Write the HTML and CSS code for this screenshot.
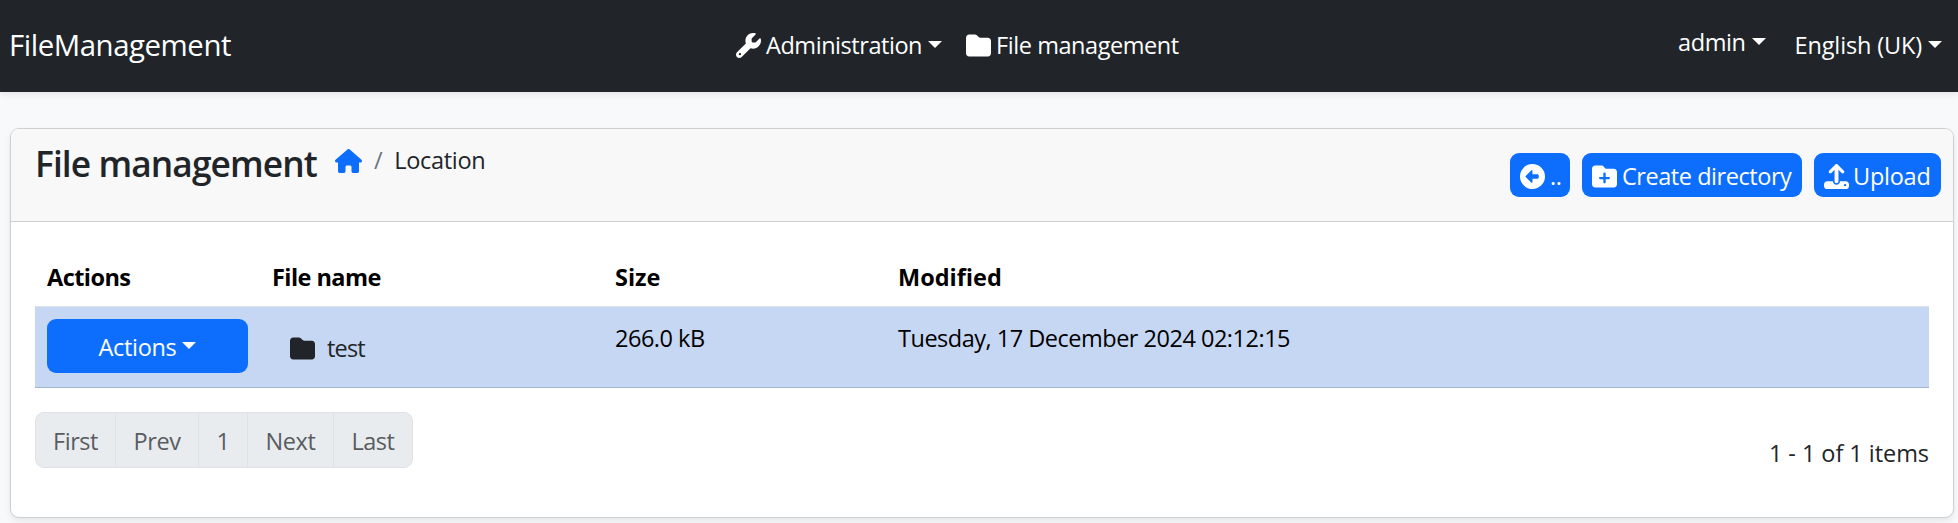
FILE: index.html
```html
<!DOCTYPE html>
<html lang="en">
<head>
<meta charset="utf-8">
<title>File management</title>
<link rel="stylesheet" href="styles.css">
</head>
<body>
<svg class="symbols" aria-hidden="true">
  <symbol id="folder" viewBox="0 0 512 512"><path d="M64 480H448c35.3 0 64-28.7 64-64V160c0-35.3-28.7-64-64-64H298.500c-17 0-33.300-6.700-45.300-18.700L226.700 50.700c-12-12-28.300-18.700-45.300-18.700H64C28.700 32 0 60.700 0 96V416c0 35.300 28.700 64 64 64z"/></symbol>
  <symbol id="folder-plus" viewBox="0 0 512 512"><path d="M512 416c0 35.300-28.700 64-64 64H64c-35.300 0-64-28.700-64-64V96C0 60.700 28.700 32 64 32H192c20.100 0 39.100 9.500 51.200 25.600l19.200 25.600c6 8.100 15.500 12.800 25.600 12.800H448c35.300 0 64 28.700 64 64V416zM232 376c0 13.300 10.700 24 24 24s24-10.700 24-24V312h64c13.300 0 24-10.700 24-24s-10.700-24-24-24H280V200c0-13.300-10.700-24-24-24s-24 10.700-24 24v64H168c-13.300 0-24 10.700-24 24s10.700 24 24 24h64v64z"/></symbol>
  <symbol id="wrench" viewBox="0 0 512 512"><path d="M352 320c88.400 0 160-71.600 160-160c0-15.300-2.200-30.100-6.200-44.200c-3.100-10.800-16.400-13.200-24.300-5.300l-76.800 76.800c-3 3-7.100 4.700-11.300 4.700H336c-8.800 0-16-7.200-16-16V118.600c0-4.200 1.700-8.300 4.700-11.300l76.800-76.800c7.900-7.900 5.400-21.200-5.300-24.300C382.100 2.200 367.300 0 352 0C263.600 0 192 71.600 192 160c0 19.100 3.400 37.500 9.500 54.500L19.900 396.100C7.200 408.800 0 426.100 0 444.100C0 481.600 30.400 512 67.900 512c18 0 35.300-7.200 48-19.900L297.500 310.500c17 6.200 35.400 9.500 54.500 9.500zM80 408a24 24 0 1 1 0 48 24 24 0 1 1 0-48z"/></symbol>
  <symbol id="back" viewBox="0 0 512 512"><path d="M512 256A256 256 0 1 0 0 256a256 256 0 1 0 512 0zM116.700 244.700l112-112c4.600-4.600 11.500-5.900 17.400-3.500s9.900 8.300 9.900 14.800v64h96c17.700 0 32 14.300 32 32v32c0 17.700-14.300 32-32 32h-96v64c0 6.500-3.900 12.300-9.900 14.800s-12.900 1.100-17.400-3.500l-112-112c-6.200-6.200-6.200-16.400 0-22.600z"/></symbol>
  <symbol id="upload" viewBox="0 0 512 512"><path fill-rule="evenodd" d="M233.400 9.400c12.500-12.500 32.800-12.500 45.300 0l128 128c12.500 12.500 12.500 32.800 0 45.300s-32.800 12.500-45.300 0L296 117.300V352c0 22-18 40-40 40s-40-18-40-40V117.300L150.600 182.600c-12.500 12.500-32.800 12.500-45.300 0s-12.500-32.800 0-45.300zM64 352H184c0 40 32 72 72 72s72-32 72-72H448c35.300 0 64 28.700 64 64v32c0 35.300-28.700 64-64 64H64c-35.300 0-64-28.700-64-64v-32c0-35.300 28.700-64 64-64zM432 408a24 24 0 1 0 0 48a24 24 0 1 0 0-48z"/></symbol>
  <symbol id="house" viewBox="0 0 576 512"><path d="M575.800 255.500c0 18-15 32.100-32 32.100h-32l.7 160.200V472c0 22.100-17.900 40-40 40H392c-22.100 0-40-17.900-40-40V384c0-17.700-14.300-32-32-32H256c-17.700 0-32 14.300-32 32v88c0 22.100-17.900 40-40 40H104c-22.100 0-40-17.900-40-40V287.600H32c-18 0-32-14-32-32.100c0-9 3-17 10-24L266.400 8c7-7 15-8 22-8s15 2 21 7L564.800 231.500c8 7 12 15 11 24z"/></symbol>
</svg>

<header class="navbar">
  <a class="brand">FileManagement</a>
  <nav class="menu">
    <a class="menu-item"><svg class="icon"><use href="#wrench"/></svg><span class="t-administration">Administration</span><i class="caret"></i></a>
    <a class="menu-item"><svg class="icon"><use href="#folder"/></svg><span class="t-files">File management</span></a>
  </nav>
  <div class="account">
    <a class="user"><span>admin</span><i class="caret"></i></a>
    <a class="language"><span>English (UK)</span><i class="caret"></i></a>
  </div>
</header>

<main class="card">
  <div class="card-header">
    <h1 class="title">File management</h1>
    <nav class="breadcrumb"><svg class="home"><use href="#house"/></svg><span class="slash">/</span><span class="location">Location</span></nav>
    <div class="toolbar">
      <button class="btn btn-back"><svg class="icon"><use href="#back"/></svg><span>..</span></button>
      <button class="btn btn-create"><svg class="icon"><use href="#folder-plus"/></svg><span>Create directory</span></button>
      <button class="btn btn-upload"><svg class="icon"><use href="#upload"/></svg><span>Upload</span></button>
    </div>
  </div>
  <div class="card-body">
    <table class="files">
      <colgroup><col class="col-actions"><col class="col-name"><col class="col-size"><col></colgroup>
      <thead>
        <tr><th>Actions</th><th>File name</th><th class="wide">Size</th><th class="wide">Modified</th></tr>
      </thead>
      <tbody>
        <tr>
          <td><button class="btn btn-actions"><span>Actions</span><i class="caret"></i></button></td>
          <td><a class="file"><svg class="icon"><use href="#folder"/></svg><span>test</span></a></td>
          <td>266.0 kB</td>
          <td>Tuesday, 17 December 2024 02:12:15</td>
        </tr>
      </tbody>
    </table>
    <div class="footer">
      <ul class="pagination"><li class="p-first">First</li><li class="p-prev">Prev</li><li class="p-num">1</li><li class="p-next">Next</li><li class="p-last">Last</li></ul>
      <span class="summary">1 - 1 of 1 items</span>
    </div>
  </div>
</main>
</body>
</html>
```
FILE: styles.css
```css
* { box-sizing: border-box; }

body {
  margin: 0;
  height: 523px;
  overflow: hidden;
  background: #f8f9fb;
  color: #212529;
  font: 400 23.5px/36px "Open Sans", sans-serif;
  letter-spacing: -0.45px;
  white-space: nowrap;
}

.symbols { position: absolute; width: 0; height: 0; }
.icon { display: block; flex: none; width: 25px; height: 25px; fill: currentColor; }

.caret {
  flex: none;
  width: 0;
  height: 0;
  margin: -2px 0 0 6px;
  border: 7px solid transparent;
  border-top-color: currentColor;
  border-bottom: 0;
}

.navbar {
  display: grid;
  grid-template-columns: 736px 1fr auto;
  height: 92px;
  padding-top: 27px;
  background: #212529;
  color: #fff;
  box-shadow: 0 3px 6px rgba(0, 0, 0, .075);
}
.brand { padding-left: 9px; font-size: 29.4px; }
.menu { display: flex; gap: 24px; }
.menu-item { display: flex; align-items: center; gap: 5px; height: 36px; }
.menu-item .caret { margin-left: 1px; }
.t-files { letter-spacing: -0.44px; }
.account { display: flex; gap: 29px; padding-right: 16px; }
.user, .language { display: flex; align-items: center; height: 36px; }
.user { margin-top: -3px; letter-spacing: -0.4px; }
.language { letter-spacing: -0.15px; }

.card {
  height: 390px;
  margin: 36px 4px 0 10px;
  border: 1px solid #cdcfd1;
  border-radius: 9px;
  background: #fff;
  box-shadow: 0 3px 6px rgba(0, 0, 0, .075);
}
.card-header {
  display: flex;
  align-items: flex-start;
  height: 93px;
  padding: 12px 12px 0 24px;
  border-bottom: 1px solid #cdcfd1;
  border-radius: 8px 8px 0 0;
  background: #f8f8f8;
}
.title { margin: 1px 0 0; width: 300px; font: 550 35.3px/43px "Open Sans", sans-serif; letter-spacing: -0.9px; }
.breadcrumb { display: flex; align-items: center; margin: 1px 0 0; letter-spacing: -0.32px; }
.home { width: 27px; height: 24px; margin-top: 1px; fill: #0d6efd; }
.slash { margin: 0 12px 0 12px; color: #6c757d; }
.toolbar { display: flex; gap: 12px; margin: 12px 0 0 auto; }

.btn {
  display: flex;
  align-items: center;
  height: 44px;
  padding: 0 10px;
  border: 0;
  border-radius: 9px;
  background: #0d6efd;
  color: #fff;
  font: inherit;
  letter-spacing: inherit;
}
.toolbar .btn { gap: 5px; }
.toolbar .icon { margin-top: 2px; }
.btn span { padding-top: 1px; }
.btn-back { width: 60px; }
.btn-create { width: 220px; }
.toolbar .btn-upload { width: 127px; gap: 4px; letter-spacing: -0.25px; }

.card-body { padding: 24px; }
.files { width: 100%; table-layout: fixed; border-collapse: separate; border-spacing: 0; color: #000; }
.col-actions { width: 225px; }
.col-name { width: 343px; }
.col-size { width: 283px; }
.files th { padding: 13px 12px 11px; border-bottom: 1px solid #dee2e6; text-align: left; font-weight: 700; letter-spacing: -0.55px; }
.files .wide { letter-spacing: 0; }
.files td { height: 81px; padding: 13px 12px 12px; border-bottom: 1px solid #a6b5cc; background: #c6d7f3; vertical-align: top; letter-spacing: -0.49px; }
.files td:first-child { padding-top: 12px; }
.btn-actions { justify-content: center; width: 201px; height: 54px; letter-spacing: -0.34px; }
.file { display: flex; align-items: center; gap: 12px; height: 36px; margin: 10px 0 0 18px; color: #212529; letter-spacing: -0.8px; }

.footer { display: flex; justify-content: space-between; margin-top: 24px; }
.pagination {
  display: flex;
  margin: 0;
  padding: 0;
  overflow: hidden;
  width: 378px;
  height: 56px;
  border: 1px solid #dee2e6;
  border-radius: 9px;
  background: #e9ecef;
  color: #595c5f;
  line-height: 55px;
  list-style: none;
  text-align: center;
}
.pagination li { padding-top: 1px; border-right: 1px solid #dee2e6; }
.p-first { width: 80px; }
.p-prev { width: 83px; }
.p-num { width: 49px; }
.p-next { width: 86px; }
.pagination .p-last { width: 78px; border-right: 0; }
.summary { margin-top: 23px; letter-spacing: -0.05px; }
```
